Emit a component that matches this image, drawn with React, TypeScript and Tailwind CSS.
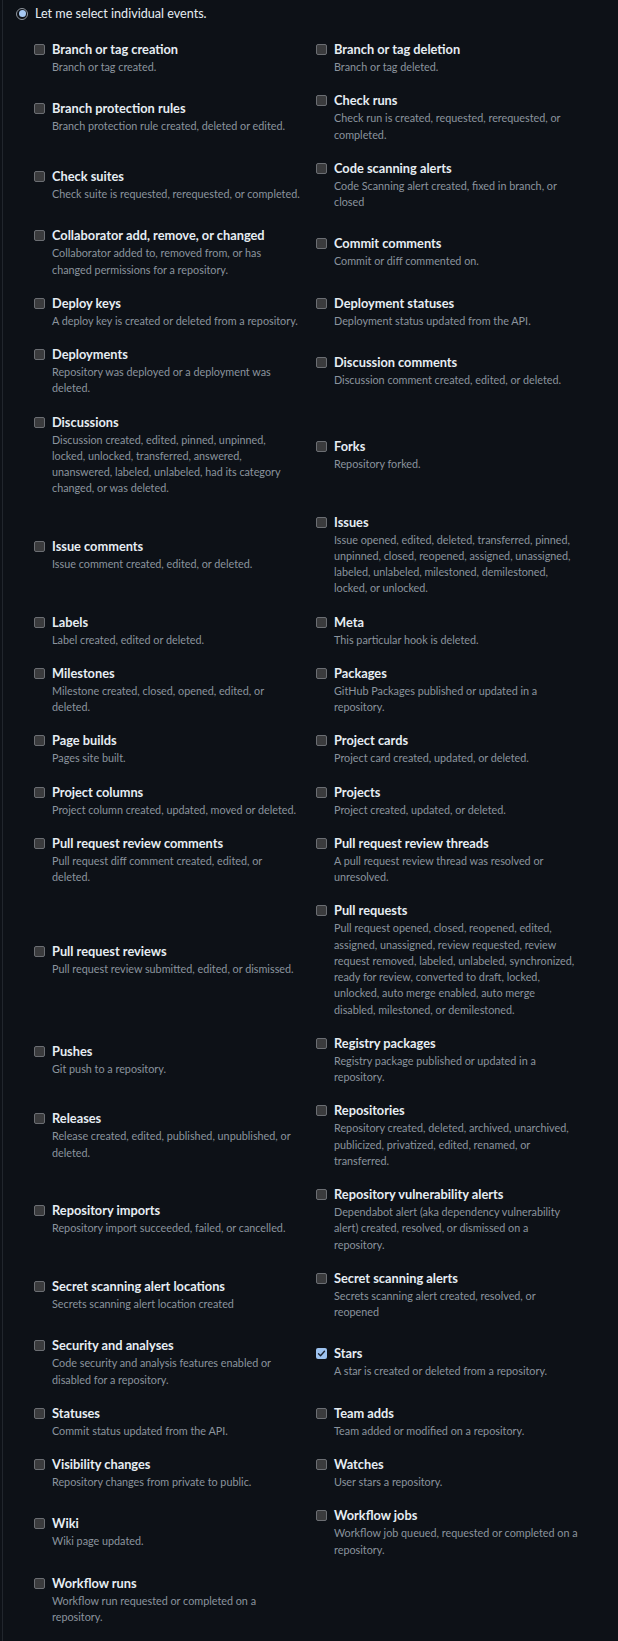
type EventOption = {
  title: string;
  note: string;
  checked?: boolean;
};

// pairs of [left, right], one grid row each
const events: EventOption[] = [
  { title: 'Branch or tag creation', note: 'Branch or tag created.' },
  { title: 'Branch or tag deletion', note: 'Branch or tag deleted.' },
  { title: 'Branch protection rules', note: 'Branch protection rule created, deleted or edited.' },
  { title: 'Check runs', note: 'Check run is created, requested, rerequested, or\ncompleted.' },
  { title: 'Check suites', note: 'Check suite is requested, rerequested, or completed.' },
  { title: 'Code scanning alerts', note: 'Code Scanning alert created, fixed in branch, or\nclosed' },
  {
    title: 'Collaborator add, remove, or changed',
    note: 'Collaborator added to, removed from, or has\nchanged permissions for a repository.',
  },
  { title: 'Commit comments', note: 'Commit or diff commented on.' },
  { title: 'Deploy keys', note: 'A deploy key is created or deleted from a repository.' },
  { title: 'Deployment statuses', note: 'Deployment status updated from the API.' },
  { title: 'Deployments', note: 'Repository was deployed or a deployment was\ndeleted.' },
  { title: 'Discussion comments', note: 'Discussion comment created, edited, or deleted.' },
  {
    title: 'Discussions',
    note: 'Discussion created, edited, pinned, unpinned,\nlocked, unlocked, transferred, answered,\nunanswered, labeled, unlabeled, had its category\nchanged, or was deleted.',
  },
  { title: 'Forks', note: 'Repository forked.' },
  { title: 'Issue comments', note: 'Issue comment created, edited, or deleted.' },
  {
    title: 'Issues',
    note: 'Issue opened, edited, deleted, transferred, pinned,\nunpinned, closed, reopened, assigned, unassigned,\nlabeled, unlabeled, milestoned, demilestoned,\nlocked, or unlocked.',
  },
  { title: 'Labels', note: 'Label created, edited or deleted.' },
  { title: 'Meta', note: 'This particular hook is deleted.' },
  { title: 'Milestones', note: 'Milestone created, closed, opened, edited, or\ndeleted.' },
  { title: 'Packages', note: 'GitHub Packages published or updated in a\nrepository.' },
  { title: 'Page builds', note: 'Pages site built.' },
  { title: 'Project cards', note: 'Project card created, updated, or deleted.' },
  { title: 'Project columns', note: 'Project column created, updated, moved or deleted.' },
  { title: 'Projects', note: 'Project created, updated, or deleted.' },
  { title: 'Pull request review comments', note: 'Pull request diff comment created, edited, or\ndeleted.' },
  { title: 'Pull request review threads', note: 'A pull request review thread was resolved or\nunresolved.' },
  { title: 'Pull request reviews', note: 'Pull request review submitted, edited, or dismissed.' },
  {
    title: 'Pull requests',
    note: 'Pull request opened, closed, reopened, edited,\nassigned, unassigned, review requested, review\nrequest removed, labeled, unlabeled, synchronized,\nready for review, converted to draft, locked,\nunlocked, auto merge enabled, auto merge\ndisabled, milestoned, or demilestoned.',
  },
  { title: 'Pushes', note: 'Git push to a repository.' },
  { title: 'Registry packages', note: 'Registry package published or updated in a\nrepository.' },
  { title: 'Releases', note: 'Release created, edited, published, unpublished, or\ndeleted.' },
  {
    title: 'Repositories',
    note: 'Repository created, deleted, archived, unarchived,\npublicized, privatized, edited, renamed, or\ntransferred.',
  },
  { title: 'Repository imports', note: 'Repository import succeeded, failed, or cancelled.' },
  {
    title: 'Repository vulnerability alerts',
    note: 'Dependabot alert (aka dependency vulnerability\nalert) created, resolved, or dismissed on a\nrepository.',
  },
  { title: 'Secret scanning alert locations', note: 'Secrets scanning alert location created' },
  { title: 'Secret scanning alerts', note: 'Secrets scanning alert created, resolved, or\nreopened' },
  { title: 'Security and analyses', note: 'Code security and analysis features enabled or\ndisabled for a repository.' },
  { title: 'Stars', note: 'A star is created or deleted from a repository.', checked: true },
  { title: 'Statuses', note: 'Commit status updated from the API.' },
  { title: 'Team adds', note: 'Team added or modified on a repository.' },
  { title: 'Visibility changes', note: 'Repository changes from private to public.' },
  { title: 'Watches', note: 'User stars a repository.' },
  { title: 'Wiki', note: 'Wiki page updated.' },
  { title: 'Workflow jobs', note: 'Workflow job queued, requested or completed on a\nrepository.' },
  { title: 'Workflow runs', note: 'Workflow run requested or completed on a\nrepository.' },
];

function Checkbox({ checked }: { checked?: boolean }) {
  if (checked) {
    return (
      <span className="mt-[4px] flex h-[11px] w-[11px] shrink-0 items-center justify-center rounded-[2px] bg-[#9dc3f0]">
        <svg viewBox="0 0 12 12" className="h-[9px] w-[9px]" fill="none">
          <path d="M2 6.3 4.7 9 10 3" stroke="#1b2330" strokeWidth="1.8" strokeLinecap="round" strokeLinejoin="round" />
        </svg>
      </span>
    );
  }
  return (
    <span className="mt-[4px] h-[11px] w-[11px] shrink-0 rounded-[2px] border border-[#6b6e73] bg-[#3a3b3d]" />
  );
}

function EventItem({ event }: { event: EventOption }) {
  return (
    <label className="flex gap-[7px]">
      <Checkbox checked={event.checked} />
      <span className="flex flex-col">
        <span className="text-[12.8px] font-bold leading-[19px] text-[#e6edf3]">{event.title}</span>
        <span className="whitespace-pre-line text-[10.8px] leading-[16.25px] text-[#8b949e]">{event.note}</span>
      </span>
    </label>
  );
}

export default function App() {
  return (
    <div className="min-h-screen bg-[#0d1117] pl-[2px] font-['Lato',sans-serif]">
      <div className="min-h-[1641px] border-l border-[#21262d] pb-[17px] pt-[4px]">
        <div className="flex items-center gap-[7px] pl-[13px]">
          <span className="flex h-[12px] w-[12px] items-center justify-center rounded-full border-[1.5px] border-[#8f959d] bg-[#0d1117]">
            <span className="h-[7px] w-[7px] rounded-full bg-[#a6c8f2]" />
          </span>
          <span className="text-[12.6px] leading-[19px] text-[#e6edf3]">Let me select individual events.</span>
        </div>
        <div className="mt-[17px] grid grid-cols-[268px_268px] items-center gap-x-[14px] gap-y-[16px] pl-[31px]">
          {events.map((event) => (
            <EventItem key={event.title} event={event} />
          ))}
        </div>
      </div>
    </div>
  );
}
